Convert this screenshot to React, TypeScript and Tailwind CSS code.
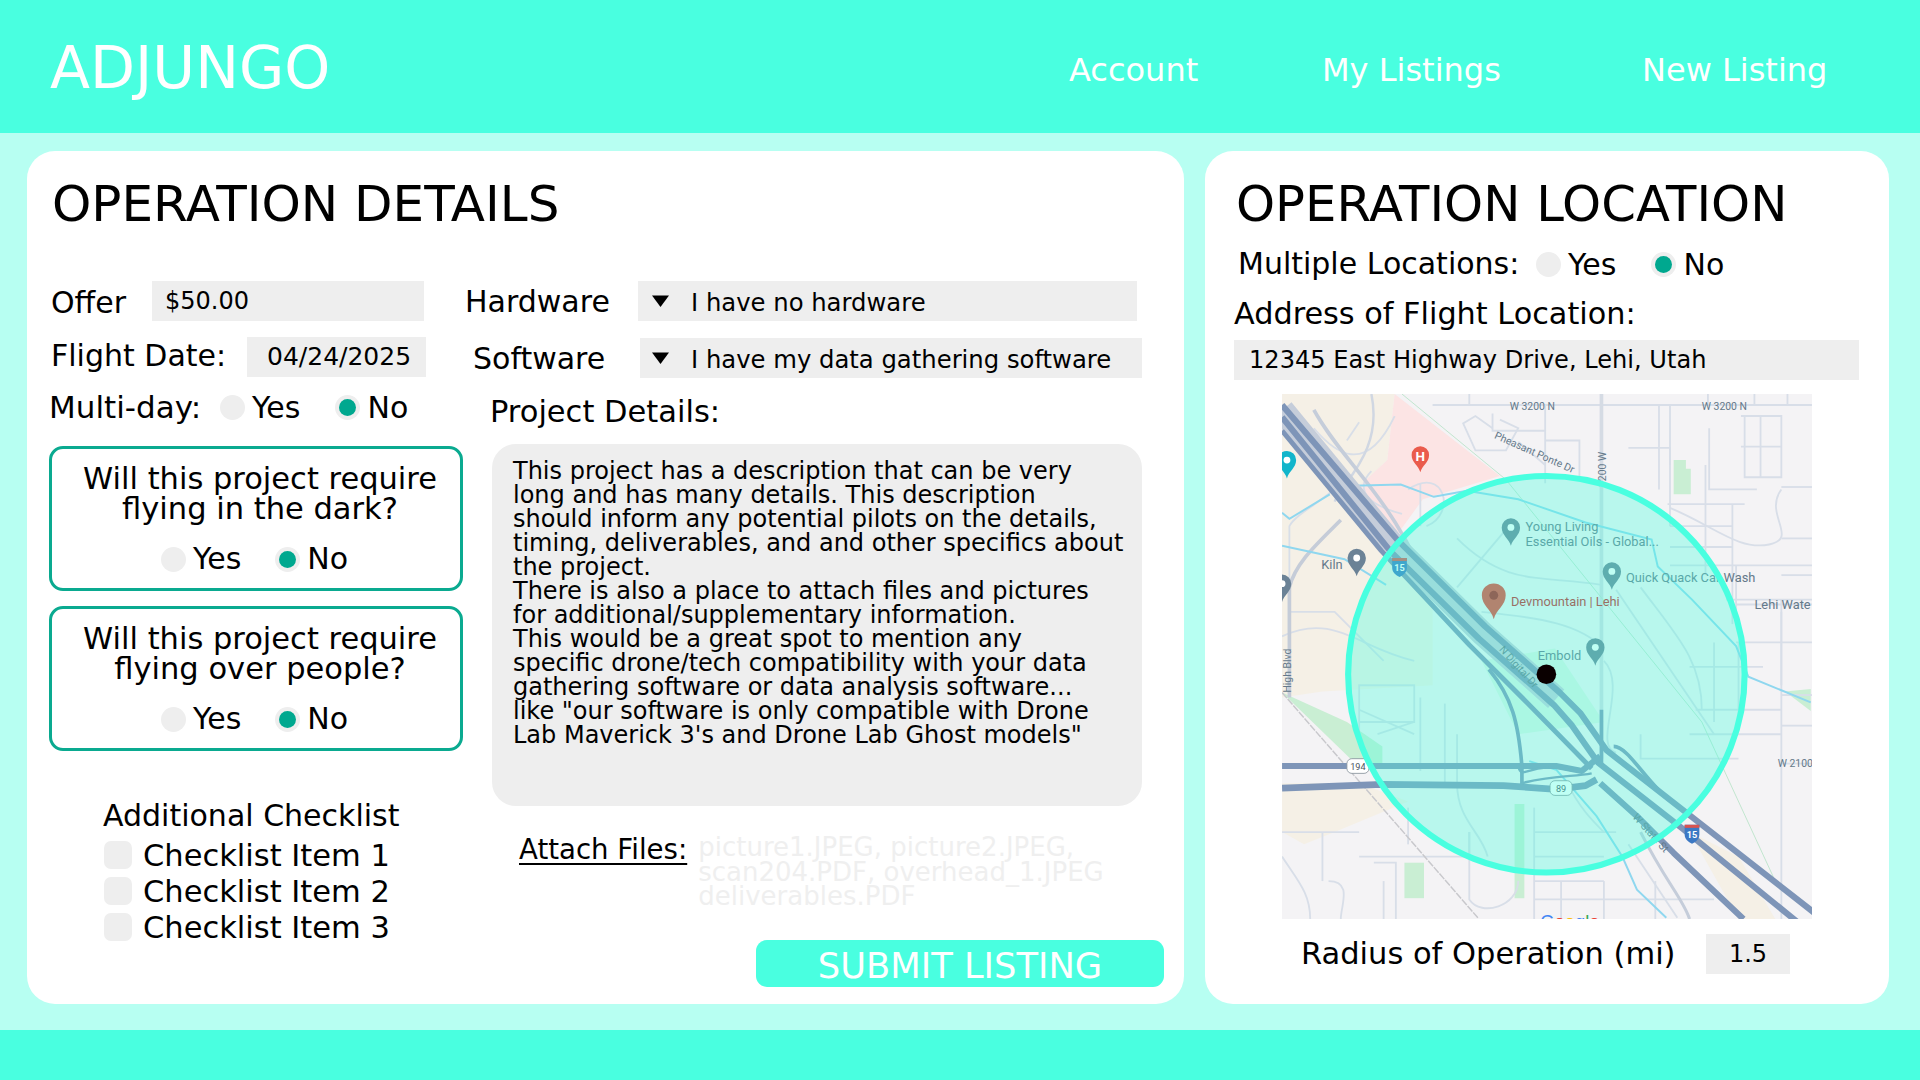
const bodyFont = "[font-family:'DejaVu_Sans',sans-serif]";

const detailLines = [
  "This project has a description that can be very",
  "long and has many details. This description",
  "should inform any potential pilots on the details,",
  "timing, deliverables, and and other specifics about",
  "the project.",
  "There is also a place to attach files and pictures",
  "for additional/supplementary information.",
  "This would be a great spot to mention any",
  "specific drone/tech compatibility with your data",
  "gathering software or data analysis software...",
  'like "our software is only compatible with Drone',
  "Lab Maverick 3's and Drone Lab Ghost models\"",
];

const Radio = ({ checked = false }: { checked?: boolean }) => (
  <span className="flex h-[25px] w-[25px] shrink-0 items-center justify-center rounded-full bg-[#eeeeee]">
    {checked && <span className="h-[17px] w-[17px] rounded-full bg-[#00a88f]" />}
  </span>
);

const YesNo = ({ gap }: { gap: string }) => (
  <div className={`flex items-center ${gap}`}>
    <div className="flex items-center gap-[7px]">
      <Radio />
      <span>Yes</span>
    </div>
    <div className="flex items-center gap-[7px]">
      <Radio checked />
      <span>No</span>
    </div>
  </div>
);

const QuestionBox = ({ line1, line2 }: { line1: string; line2: string }) => (
  <div className="flex h-[145px] w-[414px] flex-col items-center rounded-[14px] border-[3px] border-[#0aaa90] pt-[15px]">
    <div className="ml-[8px] text-center text-[30.5px] leading-[30px]">
      <div>{line1}</div>
      <div>{line2}</div>
    </div>
    <div className="mt-[17px] -ml-[3px] text-[30px] leading-[36px]">
      <YesNo gap="gap-[34px]" />
    </div>
  </div>
);

const Select = ({ text, width, pad }: { text: string; width: string; pad: string }) => (
  <div className={`flex h-[40px] items-center bg-[#eeeeee] text-[24.3px] ${width} ${pad}`}>
    <svg width="17" height="12" viewBox="0 0 17 12" className="mr-[22px] shrink-0">
      <path d="M0 0.5h17L8.5 12z" fill="#000" />
    </svg>
    <span className="pt-[4px]">{text}</span>
  </div>
);

const Pin = ({ x, y, color, s = 1, dot = "#fff" }: { x: number; y: number; color: string; s?: number; dot?: string }) => (
  <g transform={`translate(${x} ${y}) scale(${s})`}>
    <path d="M0 0C-1.5-6-7.5-8.5-7.5-15A7.5 7.5 0 1 1 7.5-15C7.5-8.5 1.5-6 0 0Z" fill={color} />
    <circle cx="0" cy="-15" r="2.8" fill={dot} />
  </g>
);

const Shield = ({ x, y, label }: { x: number; y: number; label: string }) => (
  <g>
    <rect x={x - 9} y={y - 6} width="18" height="12" rx="4" fill="#fff" stroke="#8a949e" strokeWidth="0.7" />
    <text x={x} y={y + 3} textAnchor="middle" fontSize="7.5" fill="#4a5560" fontFamily="Roboto, sans-serif">{label}</text>
  </g>
);

const Interstate = ({ x, y }: { x: number; y: number }) => (
  <g>
    <path d={`M${x - 6} ${y - 6}h12v8c0 4-3 6-6 7.5c-3-1.500-6-3.500-6-7.500z`} fill="#3b78c4" />
    <path d={`M${x - 6} ${y - 6}h12v2.500h-12z`} fill="#d9534f" />
    <text x={x} y={y + 5} textAnchor="middle" fontSize="7.500" fontWeight="700" fill="#fff" fontFamily="Roboto, sans-serif">15</text>
  </g>
);

const minorRoads = [
  "M1170 331H1480", "M1200 322V331", "M1395 322V331", "M1433 322V331", "M1460 322V331",
  "M1219 350L1205 340L1195 346L1205 368H1230L1240 350L1225 343", "M1219 338V352H1262V395", "M1262 352V331", "M1240 361L1262 380",
  "M1262 360H1290V390", "M1355 331V400", "M1364 331V430", "M1330 366H1364V380", "M1393 380V470", "M1396 350V400H1435",
  "M1422 340H1455V390H1425V340", "M1422 365H1455", "M1438 340V390", "M1455 400C1440 420 1470 440 1445 445C1420 450 1400 430 1364 415",
  "M1362 412H1425", "M1364 430H1415", "M1415 412V510", "M1364 447H1415", "M1364 462H1480", "M1418 462V500", "M1418 494H1480", "M1418 525H1480",
  "M1455 398H1480", "M1455 440H1480", "M1455 470H1480", "M1455 500V560",
  "M1410 490H1480", "M1455 490V751", "M1455 568H1480", "M1455 593H1480", "M1455 624H1480",
  "M1385 580H1455", "M1380 600H1455", "M1400 525V590", "M1420 525V590", "M1380 545H1440",
  "M1340 480C1370 520 1390 540 1390 580", "M1320 482L1400 600", "M1340 600V620H1420",
  "M1073 350C1090 370 1115 390 1139 340", "M1100 360L1110 345", "M1120 385C1110 395 1108 410 1145 420",
  "M1160 395V430", "M1150 400C1180 380 1190 420 1165 430", "M1047 520C1090 500 1110 530 1155 540",
  "M1053 570V430C1058 420 1080 410 1095 395", "M1053 500H1090L1130 540", "M1110 610V560H1155V590H1110",
  "M1110 580L1155 600", "M1155 590L1125 600", "M1190 440C1230 480 1260 470 1308 478", "M1228 435L1190 480", "M1210 500C1260 505 1290 510 1310 530",
  "M1310 540C1330 560 1300 610 1320 615", "M1190 600V640C1190 670 1210 680 1215 700", "M1150 660V690", "M1110 700H1200V680",
  "M1200 680V735C1210 750 1240 740 1240 720", "M1047 680H1110", "M1080 680V720", "M1130 720V751", "M1122 705H1140V751", "M1085 720C1105 720 1095 740 1095 751",
  "M1253 660V751", "M1253 680H1320", "M1253 700H1310", "M1253 720H1310", "M1280 640C1290 660 1300 670 1310 680", "M1330 690L1370 750",
  "M1253 735H1400", "M1310 720V751", "M1275 720V751", "M1352 720V751", "M1047 700C1060 720 1070 730 1070 751", "M1160 570V630", "M1180 575V640",
];

const MapView = () => (
  <svg viewBox="1047 322 433 429" className="block h-[525px] w-[530px]">
    <rect x="1047" y="322" width="433" height="429" fill="#f4f3f5" />
    <path d="M1047 322H1139L1133 376L1104 403L1138 441L1170 470V560L1080 565L1047 570Z" fill="#f5f0e6" />
    <path d="M1139 322L1225 389L1162 408L1138 441L1104 403L1133 376Z" fill="#fce4e4" />
    <path d="M1047 640H1110L1150 655L1090 680L1065 690L1047 680Z" fill="#f5f0e6" />
    <path d="M1380 680L1420 700L1450 751H1420Z" fill="#f5f0e6" />
    <path d="M1047 566L1100 590L1129 610V626L1105 622Z" fill="#c9eed3" />
    <path d="M1367 376H1377V383H1381V404H1367Z" fill="#c9eed3" />
    <path d="M1147 705H1163V734H1147Z" fill="#c9eed3" />
    <path d="M1237 657H1245V734H1237Z" fill="#c9eed3" />
    <path d="M1458 565L1479 563V581Z" fill="#c9eed3" />
    <path d="M1210 540L1270 530L1310 590L1240 600Z" fill="#dff3e5" />

    <g fill="none" stroke="#d8dee8" strokeWidth="1.500">
      {minorRoads.map((d) => <path key={d} d={d} />)}
    </g>
    <path d="M1308 322V620" fill="none" stroke="#d5dbe4" strokeWidth="3" />
    <path d="M1053 570V480C1058 460 1075 445 1095 425" fill="none" stroke="#c5ccd8" strokeWidth="3" />
    <path d="M1120 322C1130 370 1095 395 1090 410" fill="none" stroke="#d0d7e2" strokeWidth="2" />
    <path d="M1047 566L1207 750" fill="none" stroke="#c8c8cc" strokeWidth="1.200" strokeDasharray="6 1" />
    <path d="M1145 322L1230 392L1390 590L1450 720" fill="none" stroke="#b9e3c8" strokeWidth="0.700" />
    <path d="M1073 335C1095 375 1130 400 1160 465" fill="none" stroke="#c5cdda" strokeWidth="3" />
    <path d="M1340 680C1360 720 1375 735 1380 751" fill="none" stroke="#c5cdda" strokeWidth="2.500" />

    <g fill="none" stroke="#8fd7ef" strokeWidth="1.600">
      <path d="M1074 366L1104 397L1144 396L1171 406L1198 401L1240 408L1295 427L1349 441L1354 463L1382 490L1418 528L1428 553L1479 574" />
      <path d="M1047 446L1098 457L1132 478" />
      <path d="M1047 419L1053 424L1086 404" />
      <path d="M1249 622L1271 629L1304 667L1325 700L1337 727L1361 750" />
    </g>

    <g fill="none" stroke="#c5cdda" strokeLinejoin="round">
      <path d="M1047 335L1138 446L1210 517L1271 571" strokeWidth="20" />
    </g>
    <g fill="none" stroke="#7e95b8" strokeLinejoin="round">
      <path d="M1047 341L1136 451L1208 522L1269 576L1284 593L1305 623L1374 677L1470 755" strokeWidth="5" />
      <path d="M1047 331L1141 441L1213 512L1274 566L1291 583L1312 613L1381 667L1482 746" strokeWidth="5" />
      <path d="M1047 352L1128 450L1200 527L1245 572L1300 628" strokeWidth="4" />
      <path d="M1307 640L1337 667L1367 697L1424 751" strokeWidth="5" />
      <path d="M1047 626H1240L1271 626L1292 630L1307 618" strokeWidth="5" />
      <path d="M1047 644L1129 641L1228 642L1271 645L1295 642L1304 637" strokeWidth="5.500" />
      <path d="M1216 547C1235 570 1240 590 1243 626V642" strokeWidth="3" />
      <path d="M1240 626C1243 640 1250 620 1285 630M1243 640C1270 633 1285 635 1300 632" strokeWidth="2" />
      <path d="M1308 580V625M1318 610C1330 610 1345 640 1365 655" strokeWidth="3" />
    </g>

    <Shield x={1109} y={626} label="194" />
    <Shield x={1275} y={644} label="89" />
    <Interstate x={1143} y={462} />
    <Interstate x={1382} y={680} />

    <Pin x={1051} y={391} color="#12b5cb" />
    <Pin x={1047} y={492} color="#6b8296" />
    <Pin x={1160} y={386} color="#ea5b4c" s={0.95} dot="#ea5b4c" />
    <text x="1160" y="377" textAnchor="middle" fontSize="11" fontWeight="700" fill="#fff" fontFamily="Roboto, sans-serif">H</text>
    <Pin x={1234} y={446} color="#6b8296" />
    <Pin x={1316.500} y={482} color="#6b8296" />
    <Pin x={1108} y={471} color="#6b8296" />
    <Pin x={1303} y={544} color="#6b8296" />
    <Pin x={1220} y={506} color="#ea4335" s={1.300} dot="#b31412" />

    <g fontFamily="Roboto, sans-serif" fontSize="10.500" fill="#64798a">
      <text x="1233" y="335" fontSize="8.500">W 3200 N</text>
      <text x="1390" y="335" fontSize="8.500">W 3200 N</text>
      <text x="1452" y="627" fontSize="8.500">W 2100</text>
      <text x="0" y="0" fontSize="8.500" transform="translate(1220 358) rotate(24)">Pheasant Ponte Dr</text>
      <text x="0" y="0" fontSize="8.500" transform="translate(1312 398) rotate(-90)">1200 W</text>
      <text x="0" y="0" fontSize="8.500" transform="translate(1054 566) rotate(-90)">High Blvd</text>
      <text x="0" y="0" fontSize="8.500" transform="translate(1224 531) rotate(48)">N Digital Dr</text>
      <text x="0" y="0" fontSize="8.500" transform="translate(1333 668) rotate(48)">W State St</text>
      <text x="1246" y="434">Young Living</text>
      <text x="1246" y="446">Essential Oils - Global...</text>
      <text x="1328" y="476">Quick Quack Car Wash</text>
      <text x="1433" y="498">Lehi Wate</text>
      <text x="1079" y="465">Kiln</text>
      <text x="1256" y="539">Embold</text>
      <text x="1234" y="495" fill="#c5221f">Devmountain | Lehi</text>
    </g>

    <circle cx="1263" cy="551" r="162" fill="#49ffe0" fillOpacity="0.350" stroke="#49ffe0" strokeWidth="5" />
    <circle cx="1263" cy="551" r="8" fill="#0a0000" />
    <text x="1258" y="758" fontSize="15" fontFamily="'Liberation Sans', sans-serif">
      <tspan fill="#4285f4">G</tspan><tspan fill="#ea4335">o</tspan><tspan fill="#fbbc05">o</tspan><tspan fill="#4285f4">g</tspan><tspan fill="#34a853">l</tspan><tspan fill="#ea4335">e</tspan>
    </text>
  </svg>
);

export default function App() {
  return (
    <div className={`flex min-h-[1080px] flex-col bg-[#b7fff2] text-black ${bodyFont}`}>
      <header className="flex h-[133px] items-center bg-[#49ffe0] text-white">
        <div className="ml-[50px] pt-[3px] text-[58.5px] leading-none">ADJUNGO</div>
        <nav className="mt-[7px] ml-auto flex text-[32px]">
          <a className="w-[253px]">Account</a>
          <a className="w-[320px]">My Listings</a>
          <a className="w-[278px]">New Listing</a>
        </nav>
      </header>

      <main className="flex h-[897px] gap-[21px] pt-[18px] pl-[27px]">
        <section className="h-[853px] w-[1157px] rounded-[28px] bg-white pt-[23px] pl-[22px]">
          <h1 className="ml-[3px] text-[50px] leading-[60px]">OPERATION DETAILS</h1>
          <div className="mt-[47px] flex gap-[2px]">
            <div className="w-[414px] shrink-0 text-[30px]">
              <div className="flex h-[40px] items-center">
                <span className="ml-[2px] w-[101px] pt-[2px]">Offer</span>
                <div className="flex h-[40px] w-[272px] items-center bg-[#eeeeee] pl-[13px] text-[24px]">$50.00</div>
              </div>
              <div className="mt-[16px] flex h-[40px] items-center">
                <span className="ml-[2px] w-[196px] -mt-[3px]">Flight Date:</span>
                <div className="flex h-[40px] w-[179px] items-center bg-[#eeeeee] pl-[20px] text-[25px]">04/24/2025</div>
              </div>
              <div className="mt-[18px] flex h-[24px] items-center">
                <span className="w-[171px] text-[31px]">Multi-day:</span>
                <YesNo gap="gap-[35px]" />
              </div>
              <div className="mt-[27px] flex flex-col gap-[15px]">
                <QuestionBox line1="Will this project require" line2="flying in the dark?" />
                <QuestionBox line1="Will this project require" line2="flying over people?" />
              </div>
              <div className="mt-[50px] ml-[54px] leading-[30px]">
                <div>Additional Checklist</div>
                <div className="mt-[10px] flex flex-col gap-[8px]">
                  {[1, 2, 3].map((n) => (
                    <div key={n} className="ml-[1px] flex h-[28px] items-center gap-[11px]">
                      <span className="h-[28px] w-[28px] rounded-[7px] bg-[#eeeeee]" />
                      <span className="pt-[1px] text-[30.5px]">Checklist Item {n}</span>
                    </div>
                  ))}
                </div>
              </div>
            </div>

            <div className="flex w-[700px] flex-col text-[30px]">
              <div className="flex h-[40px] items-center">
                <span className="w-[173px]">Hardware</span>
                <Select text="I have no hardware" width="w-[499px]" pad="pl-[14px]" />
              </div>
              <div className="mt-[17px] flex h-[40px] items-center">
                <span className="ml-[8px] w-[167px]">Software</span>
                <Select text="I have my data gathering software" width="w-[502px]" pad="pl-[12px]" />
              </div>
              <div className="mt-[19px] ml-[25px] leading-[30px] text-[30.5px]">Project Details:</div>
              <div className="mt-[17px] ml-[27px] h-[362px] w-[650px] rounded-[24px] bg-[#eeeeee] pt-[15px] pl-[21px] text-[24px] leading-[24px]">
                {detailLines.map((line) => (
                  <div key={line}>{line}</div>
                ))}
              </div>
              <div className="mt-[28px] ml-[54px] flex h-[75px] text-[27.6px]">
                <span className="-mt-[5px] h-fit underline underline-offset-4">Attach Files:</span>
                <div className="ml-[11px] pt-[1px] text-[26px] leading-[24.500px] text-[#efefef]">
                  <div>picture1.JPEG, picture2.JPEG,</div>
                  <div>scan204.PDF, overhead_1.JPEG</div>
                  <div>deliverables.PDF</div>
                </div>
              </div>
              <button className="mt-[31px] ml-[291px] h-[47px] w-[408px] rounded-[11px] bg-[#49ffe0] text-[35.3px] text-white">
                SUBMIT LISTING
              </button>
            </div>
          </div>
        </section>

        <section className="flex h-[853px] w-[684px] flex-col rounded-[28px] bg-white pt-[23px] pl-[29px] text-[30px]">
          <h1 className="ml-[2px] text-[49.7px] leading-[60px]">OPERATION LOCATION</h1>
          <div className="mt-[14px] ml-[4px] flex h-[32px] items-center">
            <span className="w-[298px] -mt-[2px]">Multiple Locations:</span>
            <YesNo gap="gap-[35px]" />
          </div>
          <div className="mt-[19px] text-[30.3px] leading-[30px]">Address of Flight Location:</div>
          <div className="mt-[11px] flex h-[40px] w-[625px] items-center bg-[#eeeeee] pl-[15px] pt-[1px] text-[24.1px]">12345 East Highway Drive, Lehi, Utah</div>
          <div className="mt-[14px] ml-[48px]">
            <MapView />
          </div>
          <div className="mt-[12px] ml-[67px] flex items-center">
            <span className="w-[405px] text-[30.5px]">Radius of Operation (mi)</span>
            <div className="flex h-[40px] w-[84px] items-center justify-center bg-[#eeeeee] text-[24px]">1.5</div>
          </div>
        </section>
      </main>

      <footer className="h-[50px] bg-[#49ffe0]" />
    </div>
  );
}
